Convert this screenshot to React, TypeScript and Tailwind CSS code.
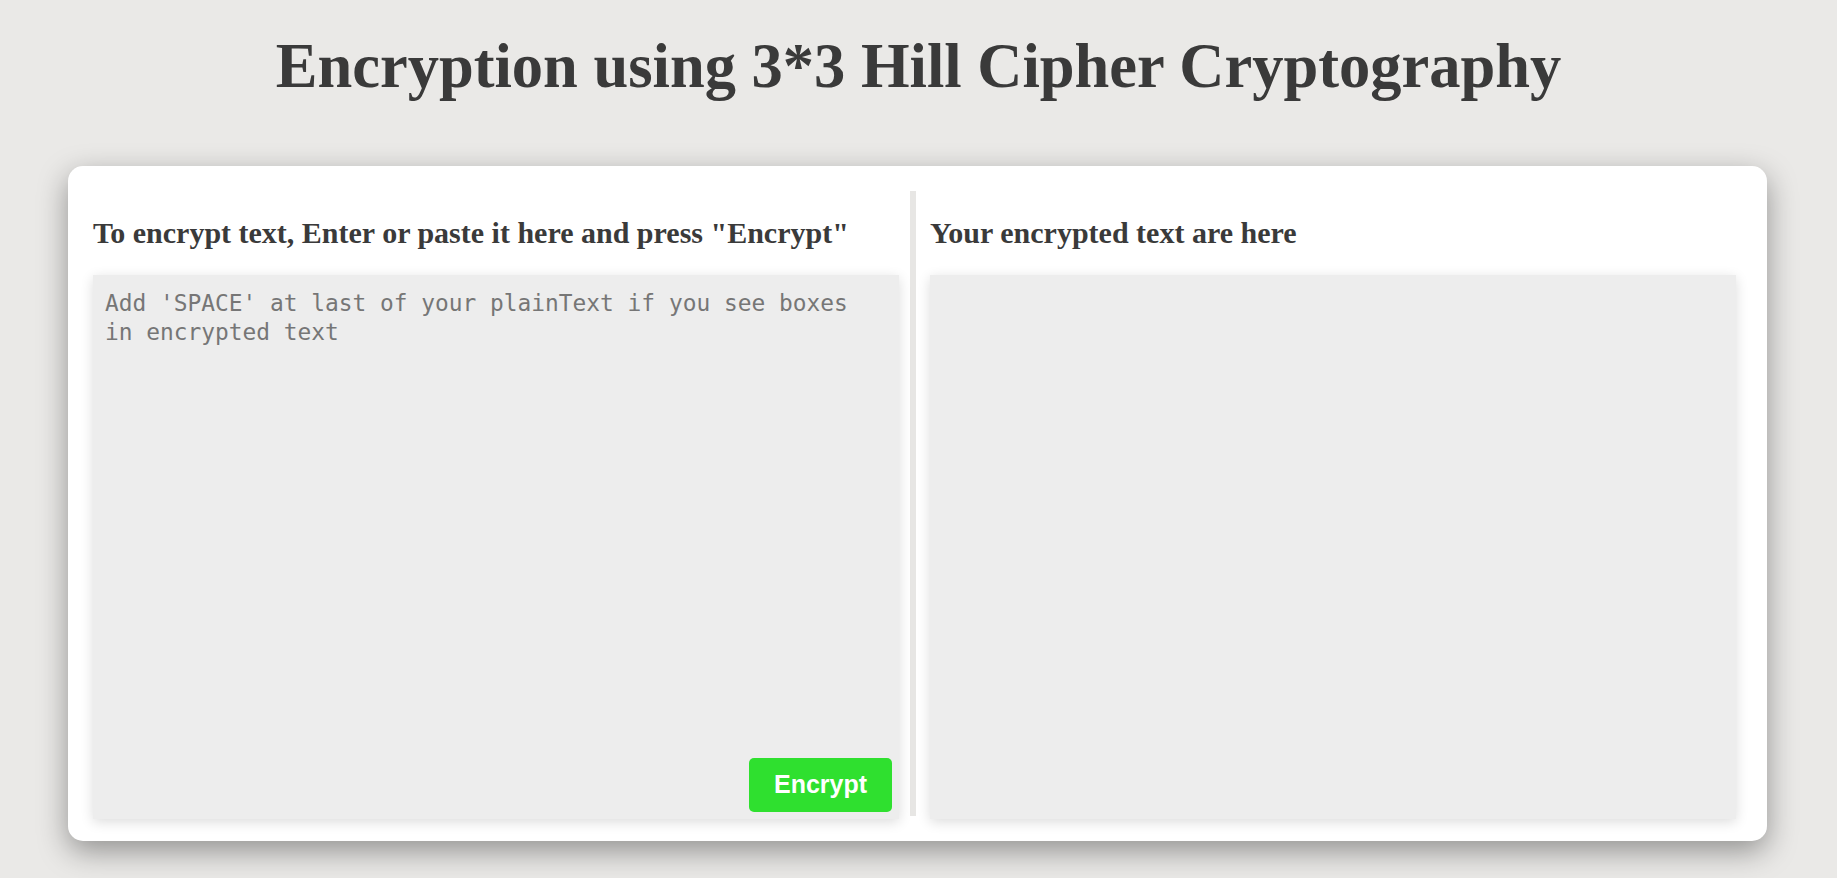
import React from "react";

export default function App() {
  return (
    <div className="h-[878px] w-full overflow-hidden bg-[#eae9e7]">
      <h1
        className="pt-[35px] text-center text-[62.5px] leading-[62px] font-bold text-[#3a3a3a]"
        style={{ fontFamily: '"Liberation Serif", "Times New Roman", serif' }}
      >
        Encryption using 3*3 Hill Cipher Cryptography
      </h1>
      <div className="ml-[68px] mt-[69px] flex h-[675px] w-[1699px] rounded-[15px] bg-white py-[25px] pl-[25px] pr-[31px] shadow-[0_10px_30px_rgba(0,0,0,0.38)]">
        <div className="flex w-[806px] flex-col">
          <h3
            className="mt-[25px] text-[30px] leading-[34px] font-bold text-[#3a3a3a] whitespace-nowrap"
            style={{ fontFamily: '"Liberation Serif", "Times New Roman", serif' }}
          >
            To encrypt text, Enter or paste it here and press "Encrypt"
          </h3>
          <div className="relative mt-[25px] h-[544px] w-[806px] shrink-0">
            <textarea
              className="h-full w-full resize-none bg-[#ededed] pl-[12px] pr-[36px] pt-[14px] text-[22.85px] leading-[29px] text-[#333] outline-none shadow-[0_3px_12px_rgba(0,0,0,0.14)] placeholder:text-[#767676]"
              style={{ fontFamily: '"DejaVu Sans Mono", monospace' }}
              placeholder="Add 'SPACE' at last of your plainText if you see boxes in encrypted text"
            />
            <button
              className="absolute bottom-[7px] right-[7px] h-[54px] w-[143px] rounded-[5px] bg-[#2fe02f] text-[25px] font-bold text-white"
              style={{ fontFamily: '"Liberation Sans", Arial, sans-serif' }}
            >
              Encrypt
            </button>
          </div>
        </div>
        <div className="ml-[11px] w-[6px] bg-[#e7e6e4]" />
        <div className="ml-[14px] flex w-[806px] flex-col">
          <h3
            className="mt-[25px] text-[30px] leading-[34px] font-bold text-[#3a3a3a] whitespace-nowrap"
            style={{ fontFamily: '"Liberation Serif", "Times New Roman", serif' }}
          >
            Your encrypted text are here
          </h3>
          <div className="mt-[25px] h-[544px] w-[806px] shrink-0 bg-[#ededed] shadow-[0_3px_12px_rgba(0,0,0,0.14)]" />
        </div>
      </div>
    </div>
  );
}
